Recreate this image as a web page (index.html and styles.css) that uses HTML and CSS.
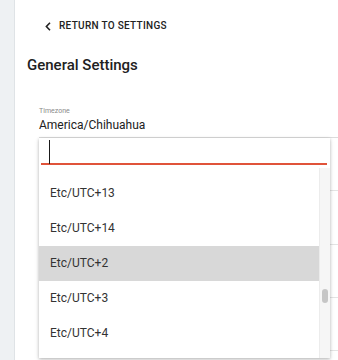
FILE: index.html
```html
<!DOCTYPE html>
<html lang="en">
<head>
<meta charset="utf-8">
<title>General Settings</title>
<link rel="stylesheet" href="styles.css">
</head>
<body>
<div class="layout">
  <aside class="sidebar"></aside>
  <main class="main">
    <a class="back" href="#">
      <svg class="chev" width="6" height="9" viewBox="0 0 6 9"><polyline points="5,0.8 1.4,4.5 5,8.2" fill="none" stroke="#222" stroke-width="1.6"/></svg>
      <span>RETURN TO SETTINGS</span>
    </a>
    <h1 class="title">General Settings</h1>
    <div class="field">
      <div class="label">Timezone</div>
      <div class="value">America/Chihuahua</div>
    </div>
    <div class="row"></div>
    <div class="row"></div>
    <div class="row"></div>
    <div class="row"></div>

    <div class="dropdown">
      <div class="search"><span class="caret"></span></div>
      <div class="listwrap">
        <div class="list">
          <ul class="items">
            <li class="item">Etc/UTC+13</li>
            <li class="item">Etc/UTC+14</li>
            <li class="item active">Etc/UTC+2</li>
            <li class="item">Etc/UTC+3</li>
            <li class="item">Etc/UTC+4</li>
          </ul>
        </div>
        <div class="track"><div class="thumb"></div></div>
      </div>
    </div>
  </main>
</div>
</body>
</html>
```

FILE: styles.css
```css
html, body {
  margin: 0;
  padding: 0;
  background: #fff;
}
body {
  font-family: Roboto, "Liberation Sans", sans-serif;
  color: #212121;
}
.layout {
  display: flex;
  height: 360px;
  overflow: hidden;
}
.sidebar {
  width: 14px;
  flex: none;
  background: #eef1f3;
  border-right: 1px solid #dfe3e6;
}
.main {
  flex: 1;
  position: relative;
  padding-left: 12px;
}
.back {
  display: flex;
  align-items: center;
  margin: 19px 0 0 18px;
  height: 14px;
  text-decoration: none;
  color: #222;
  font-size: 10px;
  font-weight: 500;
  letter-spacing: 0.3px;
  line-height: 14px;
}
.chev {
  margin-right: 8px;
}
.title {
  margin: 22px 0 0 0;
  font-size: 15px;
  font-weight: 500;
  line-height: 20px;
  color: #212121;
}
.field {
  margin: 32px 0 0 12px;
  padding-bottom: 4px;
  border-bottom: 1px solid #dcdcdc;
}
.label {
  font-size: 7px;
  line-height: 9px;
  color: #8a8a8a;
}
.value {
  margin-top: 1px;
  font-size: 12px;
  line-height: 16px;
  color: #212121;
}
.row {
  margin-left: 12px;
  height: 52.3px;
  border-bottom: 1px solid #e4e4e4;
}
.dropdown {
  position: absolute;
  left: 24px;
  top: 138px;
  width: 291px;
  height: 220px;
  background: #fff;
  box-shadow: 0 1px 3px rgba(0,0,0,0.25), 0 2px 6px rgba(0,0,0,0.08);
  display: flex;
  flex-direction: column;
}
.search {
  margin: 0 3px 0 2px;
  height: 25px;
  border-bottom: 2px solid #e0533a;
  display: flex;
  align-items: flex-start;
}
.caret {
  margin: 2px 0 0 8px;
  width: 1px;
  height: 24px;
  background: #1a1a1a;
}
.listwrap {
  flex: 1;
  display: flex;
  min-height: 0;
  margin-top: 1px;
}
.list {
  flex: 1;
  overflow: hidden;
}
.items {
  list-style: none;
  margin: 10px 0 0 0;
  padding: 0;
}
.item {
  height: 35px;
  line-height: 35px;
  padding-left: 11px;
  font-size: 12px;
  color: #333;
}
.item.active {
  background: #d8d8d8;
}
.track {
  width: 10px;
  flex: none;
  margin-top: 2px;
  background: #f6f6f6;
  border-left: 1px solid #ececec;
}
.thumb {
  margin: 121px 0 0 2px;
  width: 6px;
  height: 14px;
  border-radius: 3px;
  background: #c6c6c6;
}
```
